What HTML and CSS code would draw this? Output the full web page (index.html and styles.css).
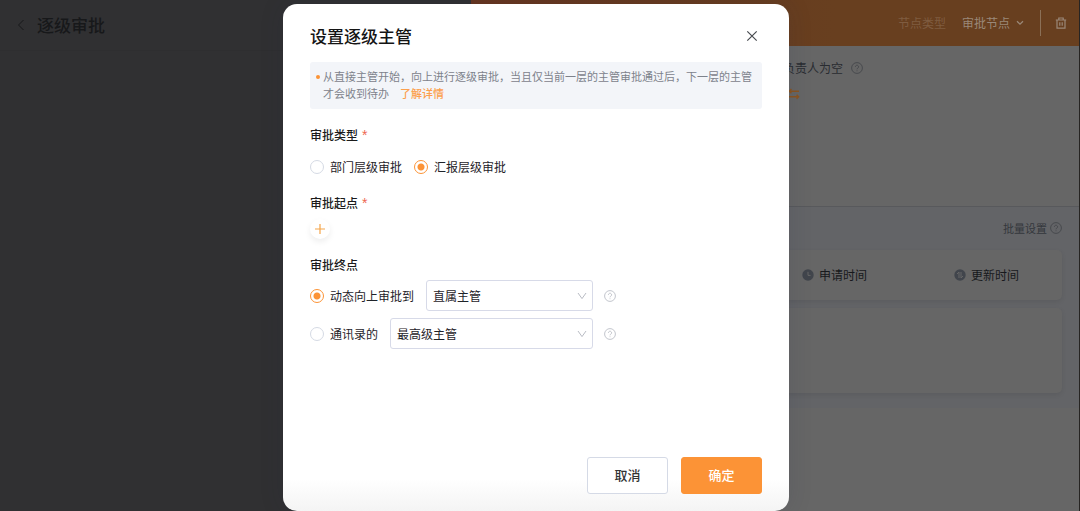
FILE: index.html
```html
<!DOCTYPE html>
<html lang="zh-CN">
<head>
<meta charset="utf-8">
<meta name="viewport" content="width=device-width, initial-scale=1">
<title>设置逐级主管</title>
<link rel="stylesheet" href="styles.css">
</head>
<body>
<svg class="symbols" aria-hidden="true">
  <symbol id="help" viewBox="0 0 12 12"><circle cx="6" cy="6" r="5.4"/><path d="M4.4 4.8a1.6 1.6 0 1 1 2.4 1.4C6.2 6.5 6 6.7 6 7.3M6 8.4v.8"/></symbol>
  <symbol id="chevron" viewBox="0 0 10 8"><path d="M1 1l4 5.6L9 1"/></symbol>
</svg>
<div class="page">
  <section class="flow">
    <header class="flow-header">
      <button class="icon-button" type="button" aria-label="返回"><svg class="back" viewBox="0 0 8 12"><path d="M6.5 1L1.5 6l5 5"/></svg></button>
      <h1 class="flow-title">逐级审批</h1>
    </header>
  </section>
  <aside class="panel">
    <header class="panel-header">
      <span class="node-label">节点类型</span>
      <button class="node-type" type="button">审批节点 <svg class="caret" viewBox="0 0 8 6"><path d="M1 1.2l3 3 3-3"/></svg></button>
      <span class="divider"></span>
      <button class="icon-button" type="button" aria-label="删除"><svg class="trash" viewBox="0 0 12 12"><path d="M.8 3h10.4M3.8 3V1h4.4v2M2 3v8.2h8V3M4.8 5.2v3.6M7.2 5.2v3.6"/></svg></button>
    </header>
    <section class="assignee">
      <div class="assignee-title">负责人为空 <svg class="help panel-help"><use href="#help"/></svg></div>
      <svg class="swap" viewBox="0 0 12 12"><path d="M11 3.2H2M3.4 1L1.4 3.2l2 2M1 8.8h9M8.6 6.8l2 2-2 2"/></svg>
    </section>
    <section class="fields">
      <div class="batch">批量设置 <svg class="help panel-help"><use href="#help"/></svg></div>
      <div class="card field-row">
        <span class="field"><svg class="field-icon" viewBox="0 0 12 12"><circle cx="6" cy="6" r="5.7"/><path d="M6 2.8V6.4h2.6"/></svg>申请时间</span>
        <span class="field"><svg class="field-icon" viewBox="0 0 12 12"><circle cx="6" cy="6" r="5.7"/><path d="M3 5l2-2v6M7 3v6l2-2"/></svg>更新时间</span>
      </div>
      <div class="card empty-card"></div>
    </section>
  </aside>
</div>

<div class="overlay">
  <form class="modal" role="dialog" aria-labelledby="dialog-title">
    <header class="modal-header">
      <h2 class="modal-title" id="dialog-title">设置逐级主管</h2>
      <button class="icon-button" type="button" aria-label="关闭"><svg class="close" viewBox="0 0 12 12"><path d="M1.3 1.3l9.4 9.4M10.7 1.3l-9.4 9.4"/></svg></button>
    </header>
    <p class="notice">从直接主管开始，向上进行逐级审批，当且仅当前一层的主管审批通过后，下一层的主管才会收到待办<a class="more" href="#">了解详情</a></p>

    <h3 class="label">审批类型<span class="required">*</span></h3>
    <div class="radios">
      <label class="option"><input class="radio" type="radio" name="type">部门层级审批</label>
      <label class="option"><input class="radio" type="radio" name="type" checked>汇报层级审批</label>
    </div>

    <h3 class="label">审批起点<span class="required">*</span></h3>
    <button class="add" type="button" aria-label="添加"><svg class="plus" viewBox="0 0 10 10"><path d="M5 0v10M0 5h10"/></svg></button>

    <h3 class="label">审批终点</h3>
    <div class="endpoints">
      <div class="endpoint">
        <label class="option"><input class="radio" type="radio" name="end" checked>动态向上审批到</label>
        <span class="select-box"><select class="select" aria-label="动态向上审批到"><option>直属主管</option></select><svg class="chevron"><use href="#chevron"/></svg></span>
        <svg class="help"><use href="#help"/></svg>
      </div>
      <div class="endpoint">
        <label class="option"><input class="radio" type="radio" name="end">通讯录的</label>
        <span class="select-box"><select class="select" aria-label="通讯录的"><option>最高级主管</option></select><svg class="chevron"><use href="#chevron"/></svg></span>
        <svg class="help"><use href="#help"/></svg>
      </div>
    </div>

    <footer class="actions">
      <button class="button" type="button">取消</button>
      <button class="button primary" type="submit">确定</button>
    </footer>
  </form>
</div>
</body>
</html>
```

FILE: styles.css
```css
* { box-sizing: border-box; }
body {
  margin: 0;
  font: 12px/20px "Noto Sans CJK SC", "Noto Sans", sans-serif;
  color: #1f2329;
}
button, select { font: inherit; color: inherit; }
h1, h2, h3, p { margin: 0; }
svg { fill: none; stroke: currentColor; flex: none; display: block; }
.symbols { position: absolute; width: 0; height: 0; }
.icon-button { display: flex; padding: 0; border: 0; background: none; }

.page {
  display: grid;
  grid-template-columns: 471fr 608fr;
  min-height: 100vh;
  border-right: 1px solid #262422;
}
.flow { background: #303032; color: #17181a; }
.flow-header {
  display: flex;
  align-items: center;
  gap: 12px;
  height: 51px;
  padding-left: 17px;
  border-bottom: 1px solid #2e2e30;
}
.flow-title { font-size: 17px; line-height: 24px; font-weight: 500; }
.back { width: 8px; height: 12px; }

.panel { display: flex; flex-direction: column; background: #666; }
.panel-header {
  display: flex;
  align-items: center;
  justify-content: flex-end;
  height: 46px;
  padding-right: 12px;
  background: linear-gradient(to right, #66351f, #683f1f 60%);
  color: #9a8878;
}
.node-label { color: #7f5c40; }
.node-type {
  display: flex;
  align-items: center;
  gap: 6px;
  margin: 0 16px;
  padding: 0;
  border: 0;
  background: none;
}
.caret { width: 8px; height: 6px; stroke-width: 1.3; }
.divider { width: 1px; height: 26px; margin-right: 14px; background: #8b7057; }
.trash { width: 12px; height: 12px; stroke-width: 1.2; }
.assignee {
  height: 161px;
  padding: 12px 216px 0 312px;
  border-bottom: 1px solid #58595c;
}
.assignee-title { display: flex; align-items: center; gap: 8px; color: #292c31; white-space: nowrap; }
.help { width: 12px; height: 12px; color: #c3c6cd; stroke-width: 1; }
.panel-help { color: #484a4e; }
.swap { width: 12px; height: 12px; margin: 10px 0 0 5px; color: #8a5420; stroke-width: 1.4; }
.fields {
  display: flex;
  flex-direction: column;
  gap: 8px;
  padding: 11px 17px 15px;
  background: #636467;
}
.batch {
  display: flex;
  align-items: center;
  justify-content: flex-end;
  gap: 3px;
  margin-bottom: 4px;
  font-size: 11px;
  color: #34373c;
}
.card { border-radius: 5px; background: #666; box-shadow: 0 2px 5px rgba(0, 0, 0, .08); }
.field-row {
  display: grid;
  grid-template-columns: 152px 108px;
  justify-content: end;
  align-items: center;
  height: 50px;
}
.field { display: flex; align-items: center; gap: 5px; color: #17191c; }
.field-icon { width: 12px; height: 12px; fill: #41454c; stroke: none; }
.field-icon path { fill: none; stroke: #666; }
.empty-card { height: 85px; }

.overlay {
  position: absolute;
  inset: 0;
  display: flex;
  justify-content: center;
  padding: 4px 8px 0 0;
}
.modal {
  display: flex;
  flex-direction: column;
  width: 506px;
  max-width: 100%;
  padding: 20px 27px 17px;
  border-radius: 14px;
  background: linear-gradient(to top, #f4f4f4, #fff 32px);
  box-shadow: 0 0 24px rgba(35, 45, 70, .14);
}
.modal-header {
  display: flex;
  align-items: center;
  justify-content: space-between;
  padding-right: 4px;
}
.modal-title { font-size: 17px; line-height: 24px; font-weight: 500; color: #141414; }
.close { width: 12px; height: 12px; color: #484b50; stroke-width: 1.2; }
.notice {
  position: relative;
  margin: 14px 0 16px;
  padding: 6px 8px 7px 13px;
  border-radius: 3px;
  background: #f3f5f9;
  color: #7d828b;
  font-size: 11px;
  line-height: 17px;
}
.notice::before {
  content: "";
  position: absolute;
  left: 6px;
  top: 13px;
  width: 4px;
  height: 4px;
  border-radius: 50%;
  background: #fc9336;
}
.more { margin-left: 11px; color: #fca04d; font-weight: 500; text-decoration: none; }
.label { font-size: 12px; line-height: 20px; font-weight: 500; color: #1b1b1b; }
.required { margin-left: 4px; color: #ee6750; font-family: "Liberation Sans", sans-serif; font-size: 14px; line-height: 1; }
.radios { display: flex; gap: 12px; margin: 12px 0 16px; }
.option { display: flex; align-items: center; gap: 6px; white-space: nowrap; }
.radio {
  appearance: none;
  width: 14px;
  height: 14px;
  margin: 0;
  border: 1px solid #d5dae4;
  border-radius: 50%;
  background: #fff;
}
.radio:checked { border-color: #fc9336; background: radial-gradient(circle, #fc9336 3px, #fff 4px); }
.add {
  display: grid;
  place-items: center;
  width: 20px;
  height: 20px;
  margin: 6px 0 16px;
  padding: 0;
  border: 0;
  border-radius: 50%;
  background: #fff;
  box-shadow: 0 3px 6px rgba(0, 0, 0, .07);
  color: #f5a54a;
}
.plus { width: 10px; height: 10px; stroke-width: 1.2; }
.endpoints { display: flex; flex-direction: column; gap: 7px; margin-top: 5px; }
.endpoint { display: flex; align-items: center; width: 306px; }
.select-box { position: relative; flex: 1; margin: 0 11px 0 12px; }
.select {
  appearance: none;
  display: block;
  width: 100%;
  height: 31px;
  padding: 0 24px 0 6px;
  border: 1px solid #d7dae8;
  border-radius: 3px;
  background: #fff;
}
.chevron {
  position: absolute;
  right: 6px;
  top: 12px;
  width: 10px;
  height: 8px;
  color: #b9bcc4;
  pointer-events: none;
}
.actions { display: flex; justify-content: flex-end; gap: 13px; margin-top: auto; }
.button {
  width: 81px;
  height: 37px;
  padding: 0 0 2px;
  border: 1px solid #d5dae6;
  border-radius: 3px;
  background: #fff;
  font-size: 13px;
  font-weight: 500;
  color: #333;
}
.primary { border-color: #fc9336; background: #fc9336; color: #fff; }
```
